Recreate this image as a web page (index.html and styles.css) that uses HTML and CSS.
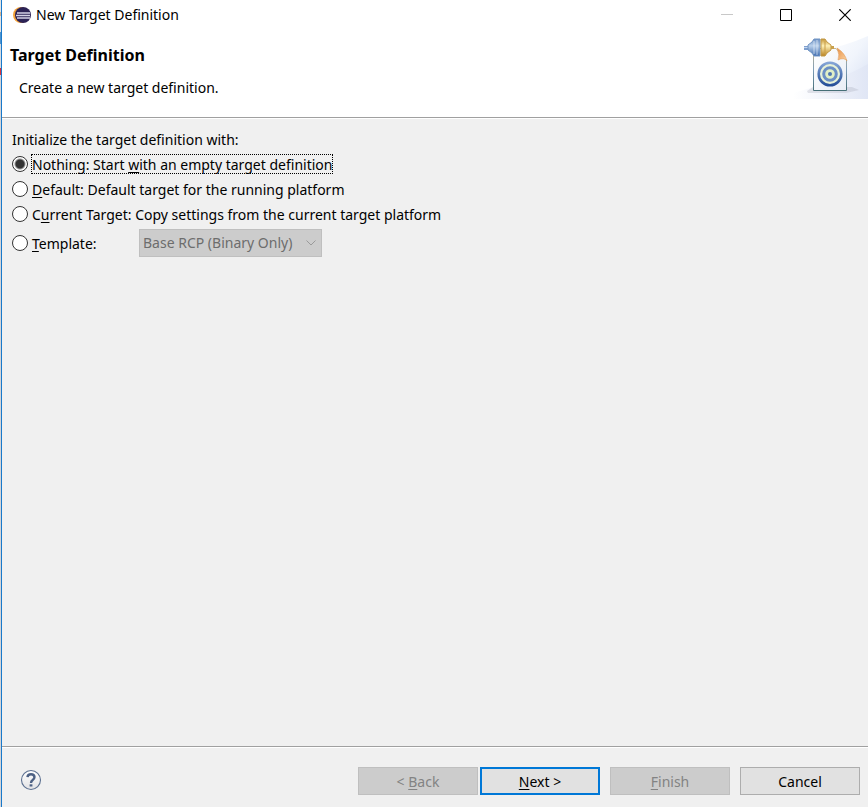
FILE: index.html
```html
<!DOCTYPE html>
<html lang="en">
<head>
<meta charset="utf-8">
<meta name="viewport" content="width=device-width, initial-scale=1">
<title>New Target Definition</title>
<link rel="stylesheet" href="styles.css">
</head>
<body>
<form class="dialog">
  <div class="titlebar">
    <svg class="app-icon" viewBox="0 0 18 18" aria-hidden="true">
      <circle cx="8" cy="9" r="8" fill="#f5a338"/>
      <circle cx="10" cy="9" r="8" fill="#2c2255"/>
      <path d="M4 7h13M3 9.500h14M4 12h13" stroke="#d4d1e6" stroke-width="1.300"/>
    </svg>
    <span class="window-title">New Target Definition</span>
    <div class="window-controls">
      <button type="button" class="window-button" aria-label="Minimize" disabled>
        <svg viewBox="0 0 12 12"><path d="M0 5.500h12" stroke="#c8c8c8"/></svg>
      </button>
      <button type="button" class="window-button" aria-label="Maximize">
        <svg viewBox="0 0 12 12"><path d="M.5.5h11v11H.5z" fill="none" stroke="#000"/></svg>
      </button>
      <button type="button" class="window-button" aria-label="Close">
        <svg viewBox="0 0 12 12"><path d="M.3.300 11.700 11.700M11.700.300.3 11.700" stroke="#000" stroke-width="1.200"/></svg>
      </button>
    </div>
  </div>
  <header class="banner">
    <div class="banner-text">
      <h1>Target Definition</h1>
      <p>Create a new target definition.</p>
    </div>
    <svg class="banner-art" viewBox="0 0 75 66" aria-hidden="true">
      <defs>
        <linearGradient id="sky" x1="0" y1="0" x2="1" y2="1">
          <stop offset="0" stop-color="#fff"/><stop offset=".5" stop-color="#f1f5fc"/><stop offset="1" stop-color="#d5def2"/>
        </linearGradient>
        <linearGradient id="ground" x1="0" x2="1">
          <stop offset="0" stop-color="#fff"/><stop offset="1" stop-color="#e0e6f5"/>
        </linearGradient>
        <linearGradient id="paper" x1="0" y1="0" x2="1" y2="1">
          <stop offset="0" stop-color="#fff"/><stop offset="1" stop-color="#e9eef6"/>
        </linearGradient>
        <linearGradient id="edge" x1="0" y1="0" x2="0" y2="1">
          <stop offset="0" stop-color="#c9b68a"/><stop offset=".5" stop-color="#7f9db8"/><stop offset="1" stop-color="#466f77"/>
        </linearGradient>
        <linearGradient id="blue" x1="0" y1="0" x2="0" y2="1">
          <stop offset="0" stop-color="#6d91c4"/><stop offset=".4" stop-color="#b9d0eb"/><stop offset="1" stop-color="#3f6cae"/>
        </linearGradient>
        <linearGradient id="gold" x1="0" y1="0" x2="0" y2="1">
          <stop offset="0" stop-color="#c59638"/><stop offset=".4" stop-color="#fff0b5"/><stop offset="1" stop-color="#b98322"/>
        </linearGradient>
        <linearGradient id="fold" x1="0" y1="0" x2="1" y2="1">
          <stop offset="0" stop-color="#e99145"/><stop offset="1" stop-color="#fbd5a6"/>
        </linearGradient>
        <linearGradient id="ring" x1="0" y1="0" x2="0" y2="1">
          <stop offset="0" stop-color="#84a4d6"/><stop offset="1" stop-color="#264f98"/>
        </linearGradient>
      </defs>
      <path d="M30 17Q52 13 75 3v63H30z" fill="url(#sky)"/>
      <path d="M0 66V60Q45 48 75 31v35z" fill="url(#ground)"/>
      <path d="M14 58 20 54H59L66 57 53 60H15z" fill="#a5a9b9" opacity=".3"/>
      <path d="M20.500 15.500H43L53.500 27V57.500H20.500z" fill="url(#paper)" stroke="url(#edge)"/>
      <path d="M44 15Q47 22 45 27Q51 24 54 28Q52 20 44 15z" fill="url(#fold)" stroke="#dd944e" stroke-width=".5"/>
      <circle cx="37" cy="41" r="11.300" fill="#e6f1d8" stroke="url(#ring)" stroke-width="2.600"/>
      <circle cx="37" cy="41" r="6.300" fill="#e0efc6" stroke="#6b8fc4" stroke-width="3"/>
      <circle cx="37" cy="41" r="2" fill="#4e76b2"/>
      <path d="M11 13h6v4h-6z" fill="#7f9fcf"/>
      <path d="M11 14h4v1h-4z" fill="#c4d7ee"/>
      <path d="M15 12 19 9l2-3h6v17h-6l-2-3-4-3z" fill="url(#blue)" stroke="#7194c3"/>
      <path d="M21 8v13M24 7v15" stroke="#f1f6fc" opacity=".6"/>
      <path d="M28 6h4l2 3 4 3v5l-4 3-2 3h-4z" fill="url(#gold)" stroke="#c29a49"/>
      <path d="M32 8v13" stroke="#c99d47"/>
      <path d="M38 13h3v3h-3z" fill="#c9a04c"/>
    </svg>
  </header>
  <main class="content">
    <fieldset>
      <legend>Initialize the target definition with:</legend>
      <div class="option">
        <input type="radio" name="source" id="nothing" checked>
        <label class="focused" for="nothing">Nothing: Start <u>w</u>ith an empty target definition</label>
      </div>
      <div class="option">
        <input type="radio" name="source" id="default">
        <label for="default"><u>D</u>efault: Default target for the running platform</label>
      </div>
      <div class="option">
        <input type="radio" name="source" id="current">
        <label for="current">C<u>u</u>rrent Target: Copy settings from the current target platform</label>
      </div>
      <div class="option template">
        <input type="radio" name="source" id="template">
        <label class="template-label" for="template"><u>T</u>emplate:</label>
        <div class="select-wrap">
          <select aria-label="Template" disabled><option>Base RCP (Binary Only)</option></select>
          <svg class="chevron" viewBox="0 0 10 6" aria-hidden="true"><path d="M.5.5 5 5 9.500.5" fill="none" stroke="#9a9a9a"/></svg>
        </div>
      </div>
    </fieldset>
  </main>
  <footer class="actions">
    <button type="button" class="help" aria-label="Help">
      <svg viewBox="0 0 22 22">
        <defs><linearGradient id="helpfill" x1="0" y1="0" x2="0" y2="1"><stop offset="0" stop-color="#fff"/><stop offset="1" stop-color="#e2e2e4"/></linearGradient></defs>
        <circle cx="11" cy="11" r="9.500" fill="url(#helpfill)" stroke="#5c7090" stroke-width="1.100"/>
        <path d="M7.500 8.200Q7.700 5.200 11 5.200T14.500 8.100Q14.500 9.700 12.700 10.900Q11 12 11 14" fill="none" stroke="#4d6184" stroke-width="2.400"/>
        <path d="M9.600 15.300h2.800v2.200H9.600z" fill="#4d6184"/>
      </svg>
    </button>
    <div class="navigation">
      <button type="button" class="action" disabled>&lt; <u>B</u>ack</button>
      <button type="button" class="action primary"><u>N</u>ext &gt;</button>
    </div>
    <button type="button" class="action" disabled><u>F</u>inish</button>
    <button type="button" class="action">Cancel</button>
  </footer>
</form>
</body>
</html>
```
FILE: styles.css
```css
* { box-sizing: border-box; }

body {
  margin: 0;
  background: #f0f0f0;
  color: #000;
  font: 14px/20px "Noto Sans", "Open Sans", sans-serif;
}

button, select { font: inherit; color: inherit; }
svg { display: block; }
u { text-underline-offset: 2px; text-decoration-thickness: 1px; }

.dialog {
  display: flex;
  flex-direction: column;
  min-height: 100vh;
  padding-left: 2px;
  background:
    linear-gradient(#1979ca, #1979ca) 1px 0 / 1px 100% no-repeat,
    linear-gradient(#e4e4e4 12px, #d6b492 12px 16px, #e4e4e4 16px 32px, #4c93cf 32px 44px, #d5dbe2 44px 68px, #d83440 68px 75px, #d4d4d8 75px) 0 0 / 1px 100% no-repeat,
    #f0f0f0;
}

.titlebar {
  display: flex;
  align-items: center;
  height: 30px;
  padding-left: 11px;
  gap: 5px;
  background: #fff;
}

.app-icon { width: 18px; height: 18px; }
.window-title { flex: 1; }
.window-controls { display: flex; }

.window-button {
  display: grid;
  place-items: center;
  width: 59px;
  height: 30px;
  padding: 0;
  border: 0;
  background: none;
}

.window-button:last-child { margin-right: -6px; }
.window-button svg { width: 12px; height: 12px; }

.banner {
  display: flex;
  justify-content: space-between;
  height: 88px;
  border-bottom: 1px solid #a0a0a0;
  box-shadow: 0 1px #fff;
  background: #fff;
}

.banner-text { padding: 15px 0 0 8px; }
.banner h1 { margin: 0; font-size: 16px; line-height: 20px; }
.banner p { margin: 13px 0 0 9px; }
.banner-art { width: 75px; height: 66px; margin-top: 3px; }

.content { flex: 1; padding: 12px 10px; }
fieldset { margin: 0; padding: 0; border: 0; }
legend { padding: 0 0 1px; }

.option {
  display: flex;
  align-items: center;
  height: 25px;
  gap: 3px;
}

.option input {
  appearance: none;
  width: 16px;
  height: 16px;
  margin: 0;
  border: 1px solid #333;
  border-radius: 50%;
  background: #fff;
}

.option input:checked { background: radial-gradient(circle, #333 4px, #fff 6px); }
.option label { padding: 2px 1px 0; line-height: 18px; }
.option .focused { outline: 1px dotted #000; outline-offset: -1px; }
.template { height: 33px; }
.option .template-label { width: 105px; }

.select-wrap { position: relative; }

select {
  appearance: none;
  display: block;
  width: 183px;
  height: 28px;
  padding: 1px 3px 0;
  border: 1px solid #bfbfbf;
  border-radius: 0;
  background: #ccc;
}

select:disabled { color: #6d6d6d; opacity: 1; }

.chevron {
  position: absolute;
  top: 11px;
  right: 6px;
  width: 10px;
  height: 6px;
}

.actions {
  display: flex;
  align-items: flex-start;
  gap: 10px;
  padding: 20px 8px 12px 18px;
  border-top: 1px solid #a0a0a0;
  box-shadow: inset 0 1px #fff;
}

.help {
  margin: 2px auto 0 0;
  padding: 0;
  border: 0;
  background: none;
}

.help svg { width: 22px; height: 22px; }
.navigation { display: flex; gap: 2px; }

.action {
  width: 120px;
  height: 28px;
  padding: 2px 0 0;
  border: 1px solid #adadad;
  border-radius: 0;
  background: #e1e1e1;
}

.action:disabled { border-color: #bfbfbf; background: #ccc; color: #838383; }
.primary { border: 2px solid #0078d7; }
```
